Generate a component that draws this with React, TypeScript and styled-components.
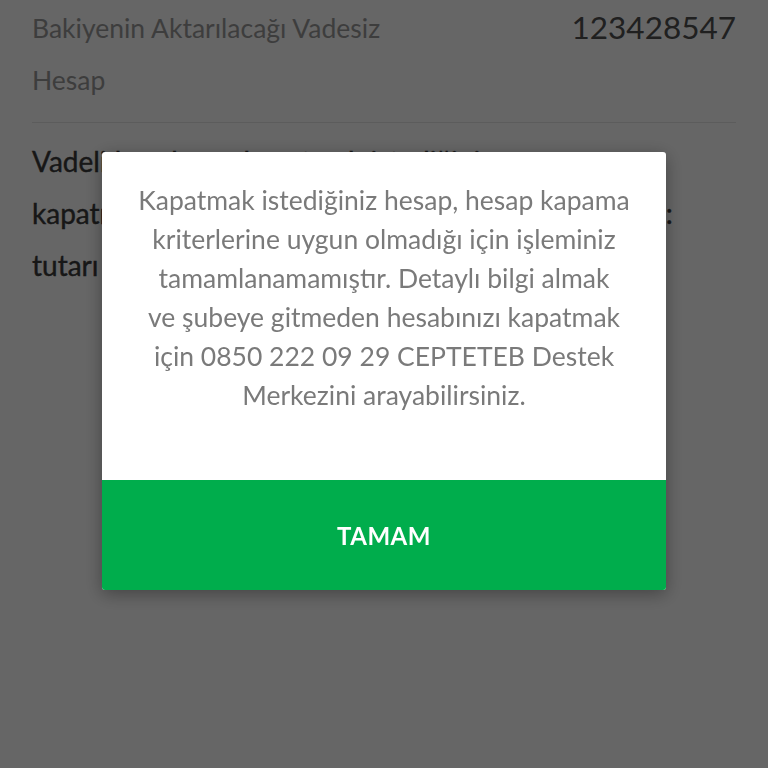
import React from "react";
import styled, { createGlobalStyle } from "styled-components";

const GlobalStyle = createGlobalStyle`
  html, body {
    margin: 0;
    padding: 0;
    background: #ffffff;
    font-family: Lato, "Noto Sans", sans-serif;
  }
  * { box-sizing: border-box; }
`;

const Page = styled.div`
  width: 768px;
  height: 768px;
  padding: 2px 32px 0;
  background: #ffffff;
  overflow: hidden;
`;

const InfoRow = styled.div`
  display: flex;
  justify-content: space-between;
  align-items: flex-start;
`;

const Label = styled.div`
  max-width: 400px;
  font-size: 26.5px;
  line-height: 52px;
  color: #9a9a9a;
`;

const Value = styled.div`
  font-size: 31.5px;
  line-height: 58px;
  margin-top: -4px;
  color: #505050;
`;

const Divider = styled.hr`
  margin: 16px 0 0;
  border: none;
  border-top: 1px solid #e6e6e6;
`;

const Notice = styled.p`
  margin: 12px 0 0;
  font-size: 28px;
  line-height: 52px;
  font-weight: 400;
  word-spacing: 1px;
  white-space: nowrap;
  color: #3a3a3a;
  -webkit-text-stroke: 0.4px #3a3a3a;
`;

const Overlay = styled.div`
  position: fixed;
  inset: 0;
  background: rgba(0, 0, 0, 0.6);
  display: flex;
  flex-direction: column;
  align-items: center;
  padding-top: 152px;
`;

const Dialog = styled.div`
  width: 564px;
  background: #ffffff;
  border-radius: 3px;
  overflow: hidden;
  box-shadow: 0 4px 18px rgba(0, 0, 0, 0.35);
  display: flex;
  flex-direction: column;
`;

const Message = styled.p`
  margin: 0;
  height: 328px;
  padding: 29px 10px 0;
  text-align: center;
  font-size: 26.5px;
  line-height: 39px;
  color: #7a7a7a;
`;

const ConfirmButton = styled.button`
  height: 110px;
  border: none;
  background: #00ad4c;
  color: #ffffff;
  font-family: Lato, "Noto Sans", sans-serif;
  font-size: 24px;
  font-weight: 700;
  letter-spacing: 0.5px;
  cursor: pointer;
`;

export default function App() {
  return (
    <>
      <GlobalStyle />
      <Page>
        <InfoRow>
          <Label>Bakiyenin Aktarılacağı Vadesiz Hesap</Label>
          <Value>123428547</Value>
        </InfoRow>
        <Divider />
        <Notice>
          Vadeli hesabınızı kapatmak istediğinize
          <br />
          kapatma işlemi sonrasında hesabınızda kalan bakiye:
          <br />
          tutarı vadesiz hesaba aktarılacaktır.
        </Notice>
      </Page>
      <Overlay>
        <Dialog role="alertdialog">
          <Message>
            Kapatmak istediğiniz hesap, hesap kapama
            <br />
            kriterlerine uygun olmadığı için işleminiz
            <br />
            tamamlanamamıştır. Detaylı bilgi almak
            <br />
            ve şubeye gitmeden hesabınızı kapatmak
            <br />
            için 0850 222 09 29 CEPTETEB Destek
            <br />
            Merkezini arayabilirsiniz.
          </Message>
          <ConfirmButton>TAMAM</ConfirmButton>
        </Dialog>
      </Overlay>
    </>
  );
}
